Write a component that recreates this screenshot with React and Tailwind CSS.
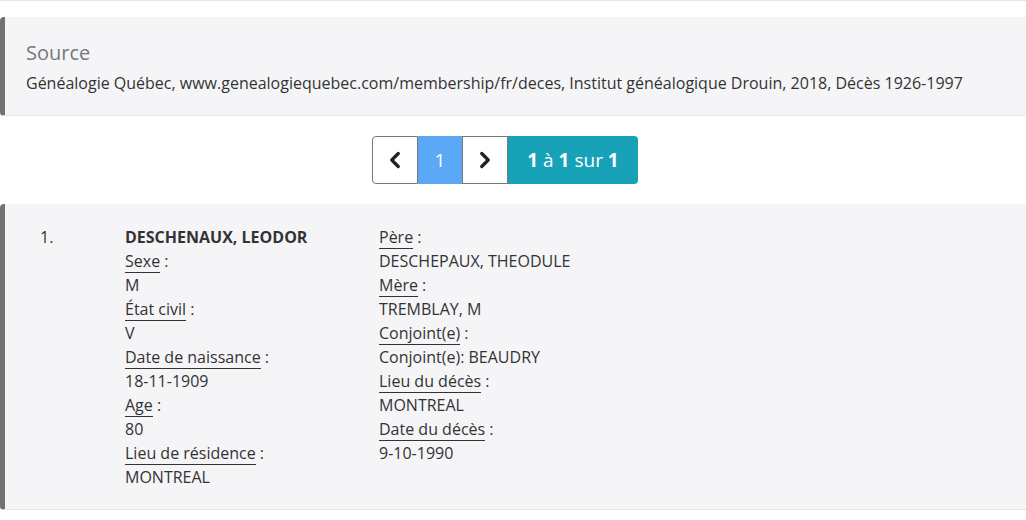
import React from "react";
import { ChevronLeft, ChevronRight } from "lucide-react";

const left = [
  { name: "DESCHENAUX, LEODOR" },
  { label: "Sexe", value: "M" },
  { label: "État civil", value: "V" },
  { label: "Date de naissance", value: "18-11-1909" },
  { label: "Age", value: "80" },
  { label: "Lieu de résidence", value: "MONTREAL" },
];

const right = [
  { label: "Père", value: "DESCHEPAUX, THEODULE" },
  { label: "Mère", value: "TREMBLAY, M" },
  { label: "Conjoint(e)", value: "Conjoint(e): BEAUDRY" },
  { label: "Lieu du décès", value: "MONTREAL" },
  { label: "Date du décès", value: "9-10-1990" },
];

const Field = ({ label, value }) => (
  <>
    <div>
      <span className="border-b border-[#333]">{label}</span> :
    </div>
    <div>{value}</div>
  </>
);

export default function App() {
  return (
    <div className="w-[1026px] h-[520px] bg-white text-[16px] leading-6 text-[#333] font-['Open_Sans',sans-serif] overflow-hidden">
      <div className="h-px bg-[#e6e6e8]" />

      {/* Source */}
      <div className="mt-[16px] bg-[#f5f5f7] border-l-[5px] border-[#727272] rounded-l border-b border-b-[#e8e8ea] pl-[21px] pt-[23px] pb-[20px]">
        <h3 className="text-[20px] leading-[26px] text-[#777] mb-[5px]">Source</h3>
        <p>
          Généalogie Québec, www.genealogiequebec.com/membership/fr/deces, Institut généalogique Drouin, 2018, Décès 1926-1997
        </p>
      </div>

      {/* Pagination */}
      <div className="flex pl-[372px] mt-[20px]">
        <div className="flex h-[48px]">
          <button className="w-[46px] flex items-center justify-center bg-white border border-[#777] rounded-l text-[#222]">
            <ChevronLeft size={26} strokeWidth={3} />
          </button>
          <div className="w-[44px] flex items-center justify-center bg-[#5aa8f6] text-white text-[19px] border-y border-[#5aa8f6]">
            1
          </div>
          <button className="w-[46px] flex items-center justify-center bg-white border border-[#777] text-[#222]">
            <ChevronRight size={26} strokeWidth={3} />
          </button>
          <div className="w-[130px] flex items-center justify-center bg-[#17a2b8] text-white text-[19px] rounded-r">
            <b>1</b>&nbsp;à&nbsp;<b>1</b>&nbsp;sur&nbsp;<b>1</b>
          </div>
        </div>
      </div>

      {/* Record */}
      <div className="mt-[20px] bg-[#f5f5f7] border-l-[5px] border-[#727272] rounded-l border-b border-b-[#e8e8ea] pt-[21px] pb-[20px] flex">
        <div className="w-[120px] pl-[35px]">1.</div>
        <div className="w-[254px]">
          <div className="font-bold">{left[0].name}</div>
          {left.slice(1).map((f) => (
            <Field key={f.label} {...f} />
          ))}
        </div>
        <div>
          {right.map((f) => (
            <Field key={f.label} {...f} />
          ))}
        </div>
      </div>
    </div>
  );
}
